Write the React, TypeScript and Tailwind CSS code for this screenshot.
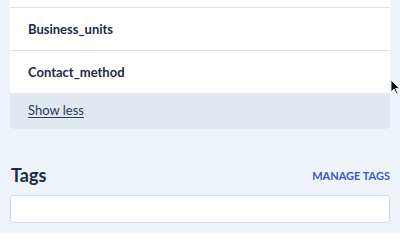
import React from 'react';

const fields = ['Business_units', 'Contact_method'];

const App = () => {
  return (
    <div className="relative min-h-[233px] w-[400px] overflow-hidden bg-[#eef2f9] px-[10px] font-['Lato',sans-serif] text-[#1b2a45]">
      <div className="overflow-hidden rounded-b-[4px] bg-white">
        <div className="h-[7px]" />
        {fields.map((field) => (
          <div key={field} className="flex h-[43px] items-center border-t border-[#dde4ee] px-[18px] pt-px text-[13px] font-bold">
            {field}
          </div>
        ))}
        <div className="flex h-[36px] items-center bg-[#e2e8f2] px-[18px]">
          <button className="text-[13px] text-[#2a3954] underline underline-offset-2">Show less</button>
        </div>
      </div>

      <div className="mt-[34px] flex items-end justify-between">
        <h2 className="pl-px text-[18px] leading-[24px] font-bold">Tags</h2>
        <button className="mb-[3px] text-[11px] font-bold text-[#3957d1]">MANAGE TAGS</button>
      </div>
      <input className="mt-[8px] block h-[28px] w-full rounded-[3px] border border-[#d3dcea] bg-white" />

      <svg className="absolute left-[390px] top-[79px]" width="10" height="16" viewBox="0 0 10 16">
        <path d="M1 1 L1 13 L4 10 L6.5 15 L8 14.3 L5.6 9.4 L9.5 9.4 Z" fill="#111" stroke="#fff" strokeWidth="0.8" />
      </svg>
    </div>
  );
};

export default App;
